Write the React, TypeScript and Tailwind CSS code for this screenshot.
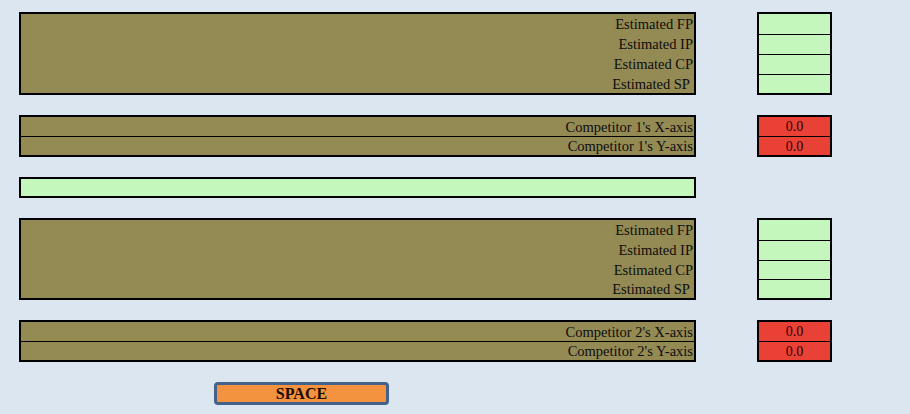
import React from "react";

const serif = { fontFamily: '"Liberation Serif", "Times New Roman", serif' };

function EstGroup({ hs }: { hs: string[] }) {
  const labels = ["Estimated FP", "Estimated IP", "Estimated CP", "Estimated SP "];
  return (
    <div className="flex items-start">
      <div className="w-[677px] border-2 border-black bg-[#948a54]">
        {labels.map((l, i) => (
          <div
            key={i}
            className={
              hs[i] +
              " flex items-center justify-end pr-[1px] pt-[1px] text-[14.5px] leading-none text-[#0d0d0d] whitespace-pre"
            }
          >
            {l}
          </div>
        ))}
      </div>
      <div className="ml-[61px] w-[75px] border-2 border-black bg-[#c4f7bb]">
        {labels.map((l, i) => (
          <div
            key={i}
            className={i === 0 ? hs[i] : hs[i] + " border-t border-black"}
          />
        ))}
      </div>
    </div>
  );
}

function CompGroup({ n }: { n: number }) {
  const labels = [`Competitor ${n}'s X-axis`, `Competitor ${n}'s Y-axis`];
  return (
    <div className="flex items-start">
      <div className="w-[677px] border-2 border-black bg-[#948a54]">
        {labels.map((l, i) => (
          <div
            key={i}
            className={
              (i === 0 ? "" : "border-t border-black ") +
              "h-[19px] flex items-center justify-end pr-[1px] pt-[1px] text-[14.5px] leading-none text-[#0d0d0d]"
            }
          >
            {l}
          </div>
        ))}
      </div>
      <div className="ml-[61px] w-[75px] border-2 border-black bg-[#ea4137]">
        {labels.map((l, i) => (
          <div
            key={i}
            className={
              (i === 0 ? "" : "border-t border-black ") +
              "h-[19px] flex items-center justify-center pt-[1px] text-[14px] leading-none text-[#2a0000]"
            }
          >
            0.0
          </div>
        ))}
      </div>
    </div>
  );
}

export default function App() {
  return (
    <div
      className="w-[910px] h-[414px] bg-[#dce6f1] overflow-hidden pl-[19px] pt-[12px] flex flex-col gap-5"
      style={serif}
    >
      <EstGroup hs={["h-[20px]", "h-[20px]", "h-[20px]", "h-[19px]"]} />
      <CompGroup n={1} />
      <div className="w-[677px] h-[21px] border-2 border-black bg-[#c4f7bb]" />
      <EstGroup hs={["h-[20px]", "h-[20px]", "h-[19px]", "h-[19px]"]} />
      <CompGroup n={2} />
      <div className="ml-[195px] w-[175px] h-[23px] rounded-[4px] border-[3px] border-[#43628c] bg-[#f3923f] flex items-center justify-center text-[16px] font-bold leading-none text-[#1a0a00]">
        SPACE
      </div>
    </div>
  );
}
